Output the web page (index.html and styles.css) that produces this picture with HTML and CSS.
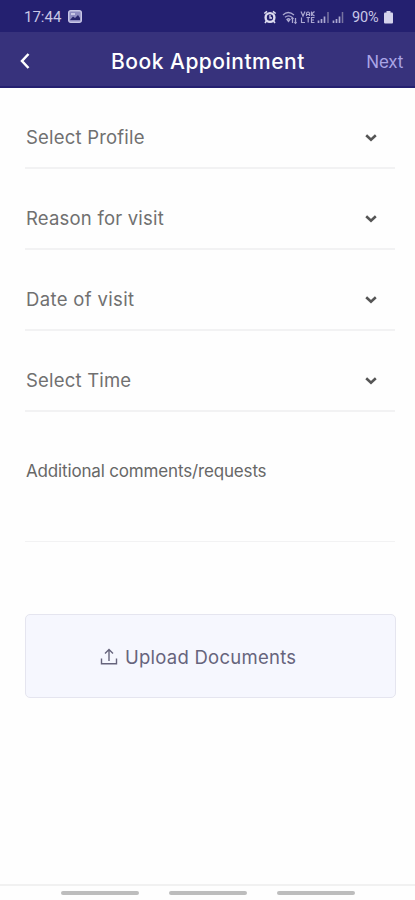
FILE: index.html
```html
<!DOCTYPE html>
<html lang="en">
<head>
<meta charset="utf-8">
<title>Book Appointment</title>
<link rel="stylesheet" href="styles.css">
</head>
<body>
<div class="status">
  <span class="time">17:44</span>
  <svg class="photo" width="14" height="13" viewBox="0 0 14 13"><rect x=".7" y=".7" width="12.6" height="11.6" rx="2" fill="#8f8cc2" stroke="#c9c7e6" stroke-width="1.4"/><path d="M2 10l3-3.5 2 1.5 3-3 2 3v2z" fill="#28246d"/><rect x="3" y="3" width="4" height="2" fill="#c9c7e6"/></svg>
  <svg class="icons" width="82" height="16" viewBox="0 0 82 16" fill="none" stroke="#aaa7d0" stroke-width="1.3">
    <circle cx="7" cy="8.5" r="4.4" stroke="#dddcf0" stroke-width="2.4"/><path d="M1.3 4.5L4 2.3M12.7 4.5L10 2.3M3.5 12l-1.5 2M10.5 12l1.5 2" stroke="#dddcf0" stroke-width="1.6"/><path d="M7 6v3h2" stroke="#dddcf0"/>
    <path d="M20 6q5-5 11 0M22 8.300q3.500-3 7 0M24 10.500q1.500-1.500 3 0l-1.500 2zM29.500 9v5M32.500 9v5M28.500 10l1-1.200 1 1.200M31.500 13l1 1.200 1-1.200" stroke-width="1.300"/>
    <path d="M38 2.500l2 4.500 2-4.500M43.500 7V4q1.500-2 3 0v3M43.500 5.500h3M48.500 2.500V7M51.500 2.500l-3 2.500 3 2M38.500 8.500v5H42M43.500 8.500h3.500M45.200 8.500v5M51.500 8.500h-3v5h3M48.500 11h2.500" stroke-width="1.200"/>
    <path d="M55.500 14v-2.500M58.500 14V10M61.500 14V7.500M70.500 14v-2.500M73.500 14V10M76.500 14V7.500" stroke-width="1.700"/><path d="M65 14V3M79.500 14V3" stroke="#77739f" stroke-width="1.500"/>
  </svg>
  <span class="percent">90%</span>
  <svg class="battery" width="9" height="13" viewBox="0 0 9 13" fill="#d5d3ec"><rect x="2.500" width="4" height="3"/><rect y="1.500" width="9" height="11" rx="1"/></svg>
</div>
<header class="bar">
  <svg class="back" width="12" height="18" viewBox="0 0 12 18"><path d="M9.500 2L3 9l6.500 7" fill="none" stroke="#fff" stroke-width="2.500"/></svg>
  <h1 class="title">Book Appointment</h1>
  <span class="next">Next</span>
</header>
<main class="form">
  <div class="field"><span>Select Profile</span><svg class="chev" width="12" height="8" viewBox="0 0 12 8"><path d="M1.200 1.300L6 5.700l4.800-4.400"/></svg></div>
  <div class="field"><span>Reason for visit</span><svg class="chev" width="12" height="8" viewBox="0 0 12 8"><path d="M1.200 1.300L6 5.700l4.800-4.400"/></svg></div>
  <div class="field"><span class="wide">Date of visit</span><svg class="chev" width="12" height="8" viewBox="0 0 12 8"><path d="M1.200 1.300L6 5.700l4.800-4.400"/></svg></div>
  <div class="field"><span>Select Time</span><svg class="chev" width="12" height="8" viewBox="0 0 12 8"><path d="M1.200 1.300L6 5.700l4.800-4.400"/></svg></div>
  <div class="comments"><span>Additional comments/requests</span></div>
  <div class="upload">
    <svg width="18" height="18" viewBox="0 0 18 18" fill="none" stroke="#66647c" stroke-width="1.400"><path d="M1.500 10.500v5.300h15v-5.300M9 13V2M5 5.500L9 1.500l4 4"/></svg>
    <span>Upload Documents</span>
  </div>
</main>
<footer class="nav"><i></i><i></i><i></i></footer>
</body>
</html>
```
FILE: styles.css
```css
* { box-sizing: border-box; }
body {
  margin: 0;
  width: 415px;
  height: 900px;
  display: flex;
  flex-direction: column;
  overflow: hidden;
  background: #fefefe;
  font-family: Inter, "Liberation Sans", sans-serif;
}
svg { display: block; flex: none; }
span, h1 { white-space: nowrap; }
.status {
  height: 32px;
  padding: 2px 22px 0 24px;
  display: flex;
  align-items: center;
  background: #242070;
  color: #c9c7e6;
  font-family: Roboto, sans-serif;
  font-size: 15px;
}
.time { width: 44px; }
.photo { margin-top: -2px; }
.icons { margin-left: 181px; }
.percent { margin-left: 7px; width: 28px; font-size: 14.5px; letter-spacing: -.1px; }
.battery { margin-left: 4px; }
.bar {
  height: 56px;
  padding: 0 12px 0 19px;
  display: flex;
  align-items: center;
  background: #37327c;
  border-bottom: 2px solid #242070;
}
.back { margin-top: 4px; }
.title {
  margin: 4px 0 0 80px;
  width: 200px;
  color: #fff;
  font-size: 21px;
  font-weight: 500;
  letter-spacing: .5px;
}
.next { margin: 5px 0 0 auto; color: #aaa5e6; font-size: 17px; letter-spacing: -.2px; }
.form { flex: 1; padding: 0 20px 0 25px; }
.field {
  height: 81px;
  padding: 19px 18px 0 1px;
  display: flex;
  align-items: center;
  justify-content: space-between;
  border-bottom: 2px solid #f2f2f3;
  color: #707070;
  font-size: 18.5px;
  letter-spacing: .2px;
}
.wide { letter-spacing: .35px; }
.chev { margin-top: 1px; fill: none; stroke: #555; stroke-width: 2.600; }
.comments {
  height: 130px;
  padding: 48px 0 0 1px;
  border-bottom: 1px solid #f2f2f3;
  color: #676767;
  font-size: 17px;
  line-height: 22px;
  letter-spacing: -.16px;
}
.upload {
  height: 84px;
  margin: 72px -1px 0 0;
  padding: 2px 0 0 74px;
  display: flex;
  align-items: center;
  gap: 7px;
  border: 1.500px solid #e5e5ef;
  border-radius: 5px;
  background: #f6f7fe;
  color: #66647c;
  font-size: 18.500px;
  letter-spacing: .25px;
}
.nav {
  height: 16px;
  padding-top: 5px;
  display: flex;
  justify-content: center;
  gap: 30px;
  border-top: 2px solid #f1f1f1;
}
.nav i { width: 78px; height: 4px; border-radius: 2px; background: #bdbdbd; }
```
